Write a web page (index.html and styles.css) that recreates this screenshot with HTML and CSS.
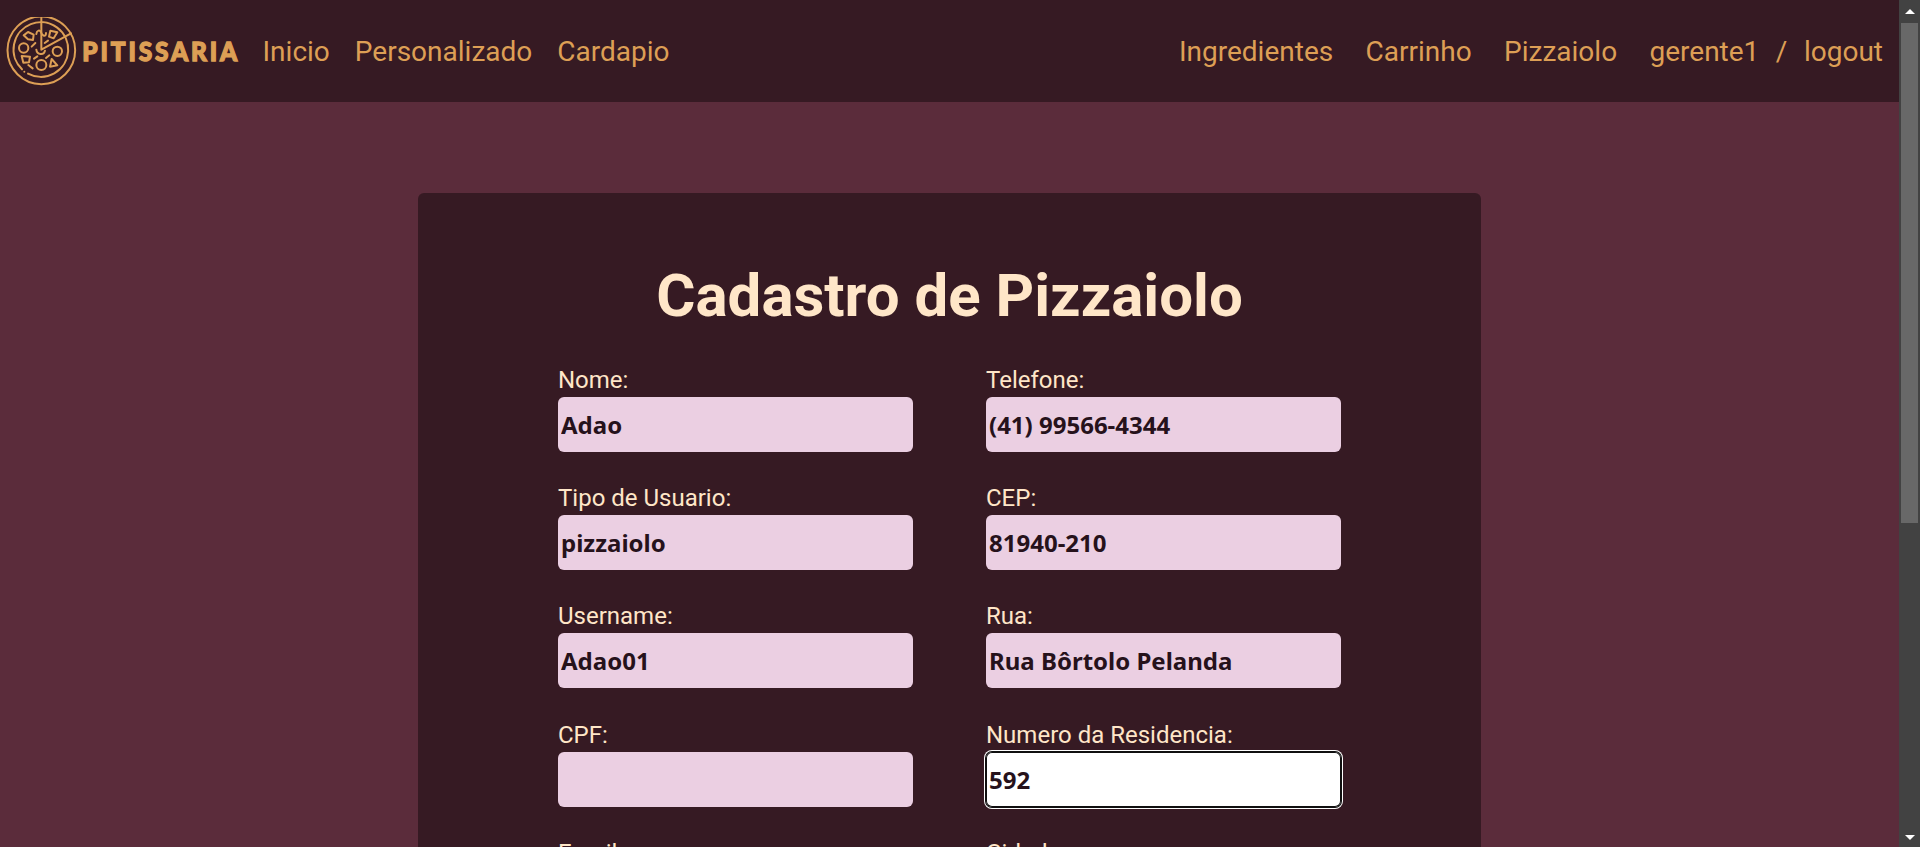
FILE: index.html
```
<!DOCTYPE html>
<html lang="pt-BR">
<head>
<meta charset="utf-8">
<title>Pitissaria</title>
<link rel="stylesheet" href="styles.css">
</head>
<body>
<div class="page">
<header class="navbar">
  <a class="brand">
    <svg class="logo" viewBox="0 0 750 252" fill="none" stroke="#dd9f55" stroke-width="6">
      <defs><clipPath id="top"><rect x="0" y="27" width="750" height="225"/></clipPath></defs>
      <g clip-path="url(#top)" stroke-linecap="round" stroke-linejoin="round">
        <circle cx="124" cy="127" r="101.5"/>
        <path d="M66 184 A82 82 0 1 1 84 197"/>
        <path d="M124 26V125L213 76"/>
        <circle cx="71" cy="120" r="14"/>
        <circle cx="172" cy="130" r="14"/>
        <circle cx="124" cy="171" r="15"/>
        <path d="M71 82L84 72L101 80L99 96L84 94Z M151 68L172 73L161 91L147 86Z M65 144L90 146L87 163L70 164Z M155 153L172 172L150 176Z"/>
        <path d="M109 78C110 67 120 64 123 73C126 84 138 89 138 75M109 125C111 141 132 143 135 128M134 105L144 98M95 116L106 105M102 152L112 145M138 150L148 142M85 171L98 181"/>
      </g>
      <circle cx="73" cy="191" r="3" fill="#dd9f55" stroke="none"/>
      <text class="logo-text" x="0" y="159" textLength="494" transform="translate(247 0) scale(.94 1)">PITISSARIA</text>
    </svg>
  </a>
  <nav class="links links-left"><a>Inicio</a><a>Personalizado</a><a>Cardapio</a></nav>
  <nav class="links links-right"><a>Ingredientes</a><a>Carrinho</a><a>Pizzaiolo</a><span class="user"><a>gerente1</a><span>/</span><a>logout</a></span></nav>
</header>
<main class="card">
  <h1>Cadastro de Pizzaiolo</h1>
  <form class="grid">
    <label>Nome:<input type="text" value="Adao"></label>
    <label>Telefone:<input type="text" value="(41) 99566-4344"></label>
    <label>Tipo de Usuario:<input type="text" value="pizzaiolo"></label>
    <label>CEP:<input type="text" value="81940-210"></label>
    <label>Username:<input type="text" value="Adao01"></label>
    <label>Rua:<input type="text" value="Rua Bôrtolo Pelanda"></label>
    <label>CPF:<input type="text"></label>
    <label>Numero da Residencia:<input class="active" type="text" value="592"></label>
    <label>Email:<input type="text"></label>
    <label>Cidade:<input type="text"></label>
  </form>
</main>
</div>
<aside class="scrollbar">
  <svg class="arrow" viewBox="0 0 10 5"><path d="M5 0L10 5H0Z"/></svg>
  <div class="track"><div class="thumb"></div></div>
  <svg class="arrow" viewBox="0 0 10 5"><path d="M0 0H10L5 5Z"/></svg>
</aside>
</body>
</html>
```
FILE: styles.css
```
* { box-sizing: border-box; }
body {
  margin: 0;
  height: 847px;
  display: flex;
  overflow: hidden;
  background: #5b2c3b;
  font-family: Roboto, sans-serif;
}
.page { flex: 1; height: 847px; overflow: hidden; }
.navbar {
  height: 102px;
  display: flex;
  align-items: center;
  background: #361a23;
  color: #dd9f55;
  font-size: 28px;
}
.brand { width: 250px; height: 86px; }
.logo { display: block; width: 250px; height: 84px; }
.logo-text {
  font-family: Lato, sans-serif;
  font-weight: 900;
  font-size: 78px;
  fill: #dd9f55;
  stroke: #dd9f55;
  stroke-width: 4px;
}
.links { display: flex; }
.links-left { gap: 25px; padding-left: 12.5px; }
.links-right { gap: 32.4px; margin-left: auto; padding-right: 16px; }
.user { display: flex; gap: 16.5px; }
.card {
  width: 1063px;
  height: 900px;
  margin: 91px auto 0;
  padding: 68px 140px 0;
  border-radius: 6px;
  background: #361a23;
  color: #ffe6c8;
}
h1 {
  margin: 0;
  font-size: 60px;
  line-height: 70px;
  text-align: center;
}
.grid {
  margin-top: 35px;
  display: grid;
  grid-template-columns: 355px 355px;
  column-gap: 73px;
  grid-auto-rows: 86px;
  row-gap: 32.2px;
}
label { font-size: 24px; line-height: 28px; }
input {
  display: block;
  width: 355px;
  height: 55px;
  margin: 3px 0 0;
  padding: 1px 3px;
  border: 0;
  border-radius: 6px;
  background: #ebcfe2;
  color: #26121b;
  font: 700 24px "Noto Sans", sans-serif;
}
.active {
  background: #fff;
  box-shadow: inset 0 0 0 1px #101010, 0 0 0 1px #101010, 0 0 0 2px #fff;
}
.scrollbar {
  width: 21px;
  height: 847px;
  padding: 9px 2px 7px;
  display: flex;
  flex-direction: column;
  align-items: center;
  background: #424242;
}
.arrow { width: 10px; height: 5px; fill: #fff; }
.track { flex: 1; width: 17px; padding-top: 9px; }
.thumb { height: 500px; background: #686868; }
```
